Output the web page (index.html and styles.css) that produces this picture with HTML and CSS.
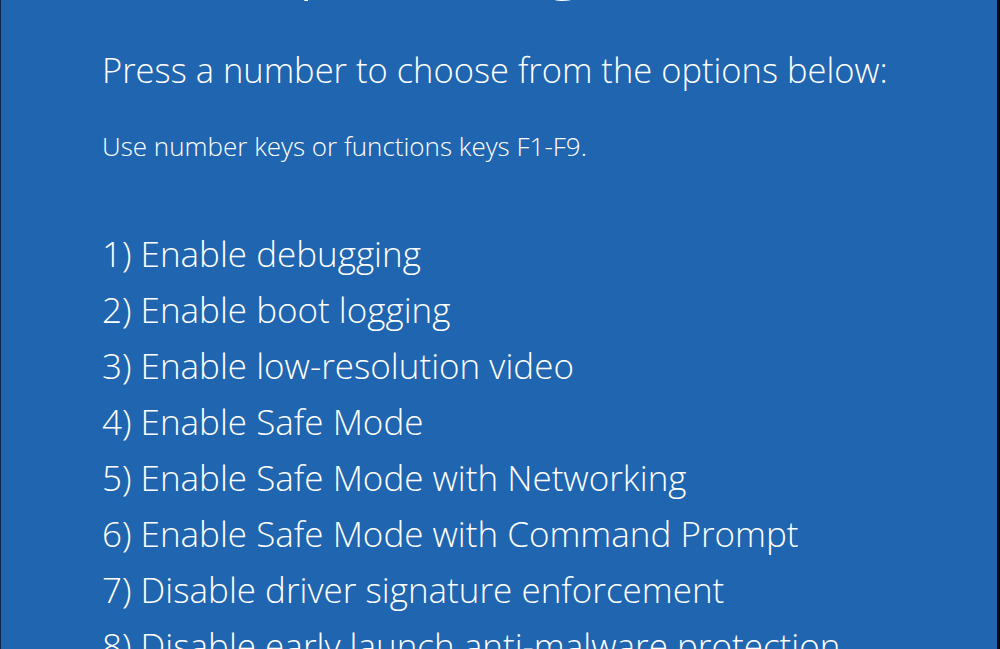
FILE: index.html
```html
<!DOCTYPE html>
<html lang="en">
<head>
<meta charset="utf-8">
<title>Startup Settings</title>
<link rel="stylesheet" href="styles.css">
</head>
<body>
<main class="screen">
  <h1 class="title">Startup Settings</h1>
  <p class="prompt">Press a number to choose from the options below:</p>
  <p class="hint">Use number keys or functions keys F1-F9.</p>
  <ol class="options">
    <li>1) Enable debugging</li>
    <li>2) Enable boot logging</li>
    <li>3) Enable low-resolution video</li>
    <li>4) Enable Safe Mode</li>
    <li>5) Enable Safe Mode with Networking</li>
    <li>6) Enable Safe Mode with Command Prompt</li>
    <li>7) Disable driver signature enforcement</li>
    <li>8) Disable early launch anti-malware protection</li>
    <li>9) Disable automatic restart after failure</li>
  </ol>
</main>
</body>
</html>
```

FILE: styles.css
```css
html, body {
  margin: 0;
  padding: 0;
  background: #000;
}

.screen {
  box-sizing: border-box;
  width: 1000px;
  height: 649px;
  overflow: hidden;
  background: #2065b0;
  border-left: 1px solid #0d2747;
  border-right: 3px solid #050a12;
  padding-left: 101px;
  color: #ffffff;
  font-family: "Open Sans", "Noto Sans", sans-serif;
  font-weight: 300;
}

.title {
  margin: -84px 0 0 0;
  font-size: 72px;
  line-height: 80px;
  font-weight: 300;
  white-space: nowrap;
}

.prompt {
  margin: 54px 0 0 0;
  font-size: 34.5px;
  line-height: 40px;
  white-space: nowrap;
}

.hint {
  margin: 41px 0 0 0;
  font-size: 26px;
  line-height: 30px;
  white-space: nowrap;
}

.options {
  list-style: none;
  margin: 65px 0 0 0;
  padding: 0;
  font-size: 35px;
  line-height: 56px;
}

.options li {
  white-space: nowrap;
}
```
